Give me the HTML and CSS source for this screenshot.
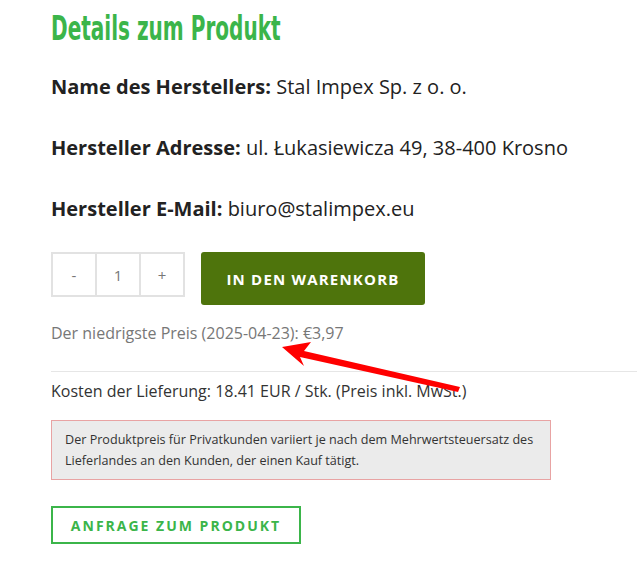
FILE: index.html
```html
<!DOCTYPE html>
<html lang="de">
<head>
<meta charset="utf-8">
<title>Details zum Produkt</title>
<link rel="stylesheet" href="styles.css">
</head>
<body>
<div class="page">
  <h2 class="title"><span class="title-text">Details zum Produkt</span></h2>
  <p class="info"><strong>Name des Herstellers:</strong> Stal Impex Sp. z o. o.</p>
  <p class="info"><strong>Hersteller Adresse:</strong> ul. Łukasiewicza 49, 38-400 Krosno</p>
  <p class="info"><strong>Hersteller E-Mail:</strong> biuro@stalimpex.eu</p>
  <div class="cart-row">
    <div class="qty">
      <span class="qty-cell">-</span>
      <span class="qty-cell">1</span>
      <span class="qty-cell">+</span>
    </div>
    <button class="btn-cart">IN DEN WARENKORB</button>
  </div>
  <p class="lowest">Der niedrigste Preis (2025-04-23): €3,97</p>
  <hr class="sep">
  <p class="shipping">Kosten der Lieferung: 18.41 EUR / Stk. (Preis inkl. MwSt.)</p>
  <div class="notice">Der Produktpreis für Privatkunden variiert je nach dem Mehrwertsteuersatz des Lieferlandes an den Kunden, der einen Kauf tätigt.</div>
  <button class="btn-inquiry">ANFRAGE ZUM PRODUKT</button>
  <svg class="arrow" width="637" height="585" viewBox="0 0 637 585">
    <polygon fill="#ff0000" points="282,347 311,342 304,351 460,387 458,392 300,357 304,366"/>
  </svg>
</div>
</body>
</html>
```

FILE: styles.css
```css
html, body {
  margin: 0;
  padding: 0;
  background: #fff;
}
.page {
  position: relative;
  width: 637px;
  height: 585px;
  overflow: hidden;
  padding-left: 51px;
  box-sizing: border-box;
  font-family: "Open Sans", "Liberation Sans", sans-serif;
  color: #222;
}
.title {
  margin: 0 0 8px;
  padding-top: 8px;
  height: 40px;
  font-family: "Liberation Sans Narrow", "DejaVu Sans Condensed", sans-serif;
  font-weight: 700;
  font-size: 34px;
  line-height: 40px;
  color: #3bb54a;
}
.title-text {
  display: inline-block;
  transform-origin: left center;
  transform: scaleX(0.655);
  white-space: nowrap;
}
.info {
  margin: 0;
  font-size: 20px;
  line-height: 61px;
  color: #222;
}
.info strong {
  font-weight: 700;
}
.cart-row {
  display: flex;
  align-items: flex-start;
  gap: 16px;
  margin-top: 13px;
}
.qty {
  display: flex;
  border: 2px solid #e2e2e2;
  height: 41px;
}
.qty-cell {
  width: 42px;
  display: flex;
  align-items: center;
  justify-content: center;
  font-size: 15px;
  color: #777;
}
.qty-cell + .qty-cell {
  border-left: 2px solid #e2e2e2;
}
.btn-cart {
  width: 224px;
  height: 53px;
  border: none;
  border-radius: 3px;
  background: #4e740c;
  color: #fff;
  font-family: "Open Sans", "Liberation Sans", sans-serif;
  font-weight: 700;
  font-size: 15px;
  letter-spacing: 1.2px;
  padding: 0;
}
.lowest {
  margin: 16px 0 0;
  font-size: 16px;
  line-height: 24px;
  color: #777;
}
.sep {
  margin: 26px 0 0;
  border: none;
  border-top: 1px solid #e6e6e6;
  height: 0;
}
.shipping {
  margin: 7px 0 0;
  font-size: 16px;
  line-height: 24px;
  color: #333;
}
.notice {
  margin-top: 17px;
  width: 500px;
  box-sizing: border-box;
  padding: 8px 13px 8px;
  background: #ebebeb;
  border: 1px solid #e8a3a3;
  font-size: 12.6px;
  line-height: 21px;
  color: #333;
}
.btn-inquiry {
  display: block;
  margin-top: 26px;
  width: 250px;
  height: 38px;
  box-sizing: border-box;
  border: 2px solid #3bb54a;
  background: #fff;
  color: #3bb54a;
  font-family: "Open Sans", "Liberation Sans", sans-serif;
  font-weight: 700;
  font-size: 14px;
  letter-spacing: 2px;
  padding: 0;
}
.arrow {
  position: absolute;
  left: 0;
  top: 0;
  pointer-events: none;
}
```
